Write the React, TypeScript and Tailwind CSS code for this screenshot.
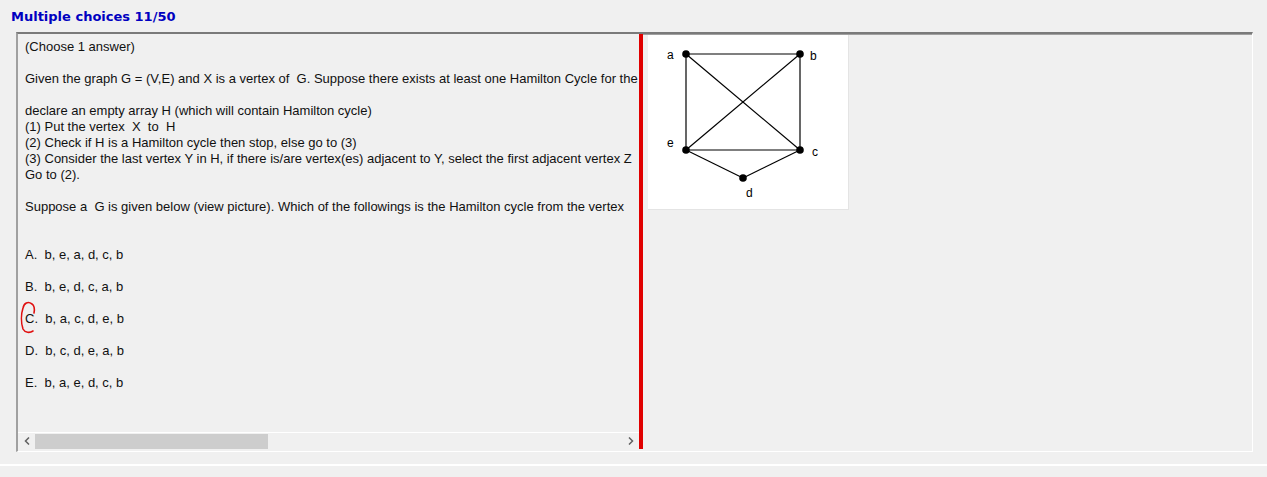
import React from 'react';

const options = [
  { key: 'A', text: 'b, e, a, d, c, b' },
  { key: 'B', text: 'b, e, d, c, a, b' },
  { key: 'C', text: 'b, a, c, d, e, b' },
  { key: 'D', text: 'b, c, d, e, a, b' },
  { key: 'E', text: 'b, a, e, d, c, b' },
];

const GraphPicture = () => {
  // vertex positions inside the white picture box
  const v = {
    a: [38, 19],
    b: [152, 19],
    e: [38, 115],
    c: [152, 115],
    d: [95, 143],
  } as Record<string, number[]>;
  const edges = [
    ['a', 'b'], ['a', 'e'], ['b', 'c'], ['e', 'c'], ['a', 'c'], ['b', 'e'], ['e', 'd'], ['c', 'd'],
  ];
  return (
    <svg width="200" height="174" viewBox="0 0 200 174">
      {edges.map(([p, q]) => (
        <line key={p + q} x1={v[p][0]} y1={v[p][1]} x2={v[q][0]} y2={v[q][1]} stroke="#000" strokeWidth="1.2" />
      ))}
      {Object.keys(v).map((k) => (
        <circle key={k} cx={v[k][0]} cy={v[k][1]} r="3.8" fill="#000" />
      ))}
      <g fontFamily="'Liberation Sans', Arial, sans-serif" fontSize="12" fill="#000">
        <text x="19" y="24">a</text>
        <text x="162" y="25">b</text>
        <text x="19" y="112">e</text>
        <text x="164" y="121">c</text>
        <text x="98" y="162">d</text>
      </g>
    </svg>
  );
};

const App = () => {
  return (
    <div className="w-[1267px] h-[477px] bg-[#f0f0f0] flex flex-col font-['Liberation_Sans',Arial,sans-serif] text-black overflow-hidden">
      <div className="h-[32px] pl-[11px] pt-[8px] text-[13px] leading-[18px] font-bold text-[#0000c0] font-['DejaVu_Sans',Verdana,sans-serif]">
        Multiple choices 11/50
      </div>

      <div className="ml-[16px] w-[1237px] h-[420px] flex border-t-2 border-t-[#7a7a7a] border-l-2 border-l-[#a0a0a0] border-r border-r-white border-b border-b-white">
        {/* question pane */}
        <div className="w-[621px] flex flex-col">
          <div className="flex-1 overflow-hidden pl-[7px] pt-[5px] text-[13px] leading-[16px] whitespace-nowrap text-[#111]">
            <div>(Choose 1 answer)</div>
            <div className="h-[16px]" />
            <div>Given the graph G = (V,E) and X is a vertex of&nbsp; G. Suppose there exists at least one Hamilton Cycle for the</div>
            <div className="h-[16px]" />
            <div>declare an empty array H (which will contain Hamilton cycle)</div>
            <div>(1) Put the vertex&nbsp; X&nbsp; to&nbsp; H</div>
            <div>(2) Check if H is a Hamilton cycle then stop, else go to (3)</div>
            <div>(3) Consider the last vertex Y in H, if there is/are vertex(es) adjacent to Y, select the first adjacent vertex Z</div>
            <div>Go to (2).</div>
            <div className="h-[16px]" />
            <div>Suppose a&nbsp; G is given below (view picture). Which of the followings is the Hamilton cycle from the vertex</div>
            <div className="h-[32px]" />
            {options.map((o) => (
              <div key={o.key} className="relative h-[32px]">
                {o.key}.&nbsp; {o.text}
                {o.key === 'C' && (
                  <svg className="absolute left-[-6px] top-[-11px]" width="22" height="36" viewBox="0 0 22 36">
                    <path d="M13 4 C9 1 5 3 4 8 C2 14 2 23 4 29 C6 33 11 33 14 31 M13 4 C15 5 16 9 15 13" fill="none" stroke="#e01010" strokeWidth="1.6" strokeLinecap="round" />
                  </svg>
                )}
              </div>
            ))}
          </div>
          {/* horizontal scrollbar */}
          <div className="h-[17px] border-t border-t-white flex items-center mb-[2px]">
            <div className="w-[17px] h-[15px] flex items-center justify-center">
              <svg width="6" height="8" viewBox="0 0 6 8"><path d="M5 0.5 L1.5 4 L5 7.5" fill="none" stroke="#606060" strokeWidth="1.5" /></svg>
            </div>
            <div className="w-[233px] h-[15px] bg-[#cdcdcd]" />
            <div className="flex-1" />
            <div className="w-[17px] h-[15px] flex items-center justify-center">
              <svg width="6" height="8" viewBox="0 0 6 8"><path d="M1 0.5 L4.5 4 L1 7.5" fill="none" stroke="#606060" strokeWidth="1.5" /></svg>
            </div>
          </div>
        </div>

        {/* splitter */}
        <div className="w-[4px] bg-[#e00000] mb-[2px]" />

        {/* picture pane */}
        <div className="flex-1 border-t border-t-[#a0a0a0] pl-[5px]">
          <div className="w-[201px] h-[175px] bg-white border-r border-b border-[#e4e4e4]">
            <GraphPicture />
          </div>
        </div>
      </div>

      <div className="mt-[12px] border-t-2 border-t-white flex-1 bg-[#f0f0f0]" />
    </div>
  );
};

export default App;
